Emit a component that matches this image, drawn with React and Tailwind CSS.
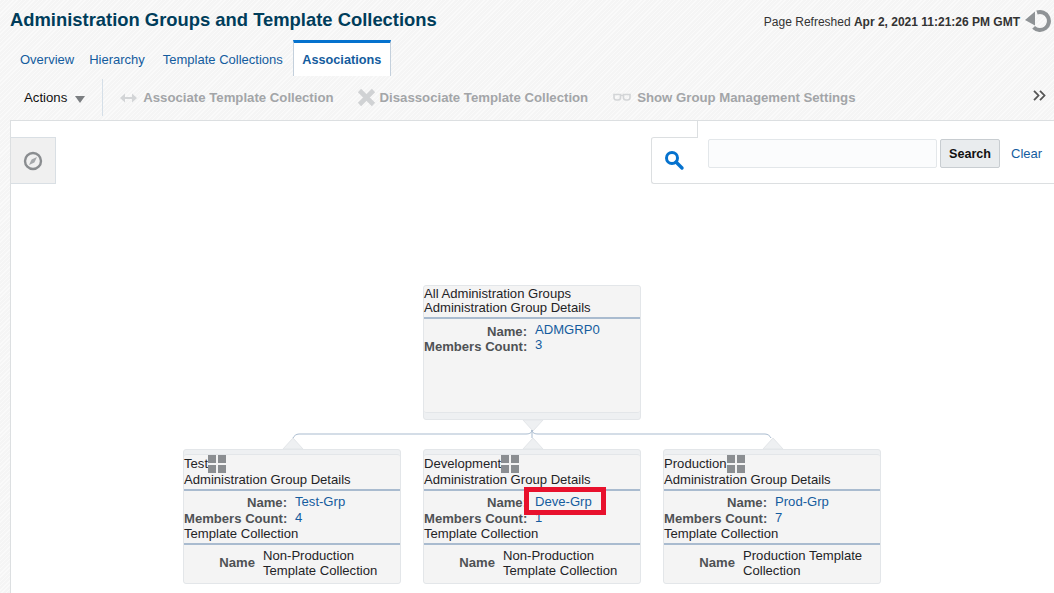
const hatch =
  "bg-[repeating-linear-gradient(135deg,#fafafa_0,#fafafa_1px,#f5f5f5_1px,#f5f5f5_3px)]";

const RefreshIcon = () => (
  <svg width="27" height="24" viewBox="0 0 27 24" className="shrink-0">
    <path d="M13 3.5A9 9 0 1 1 9.6 18.4" fill="none" stroke="#8f9396" strokeWidth="4" />
    <path d="M1 11 11 2.500V16.500z" fill="#8f9396" />
  </svg>
);

const SearchIcon = () => (
  <svg width="22" height="22" viewBox="0 0 22 22">
    <circle cx="9" cy="9" r="5.5" fill="none" stroke="#0572ce" strokeWidth="3" />
    <path d="M13 13l6 6" stroke="#0572ce" strokeWidth="3.4" strokeLinecap="round" />
  </svg>
);

const CompassIcon = () => (
  <svg width="20" height="20" viewBox="0 0 20 20">
    <circle cx="10" cy="10" r="8" fill="none" stroke="#8a8d90" strokeWidth="2.4" />
    <path d="M14 6l-2.6 5.4L6 14l2.6-5.4z" fill="#a5a8ab" />
  </svg>
);

const GridIcon = () => (
  <svg width="18" height="18" viewBox="0 0 18 18" className="shrink-0">
    <rect x="0" y="0" width="8" height="8" fill="#8b8e91" />
    <rect x="10" y="0" width="8" height="8" fill="#8b8e91" />
    <rect x="0" y="10" width="8" height="8" fill="#8b8e91" />
    <rect x="10" y="10" width="8" height="8" fill="#8b8e91" />
  </svg>
);

const ArrowsIcon = () => (
  <svg width="17" height="10" viewBox="0 0 17 10">
    <path d="M0 5l5-4.5v9zM17 5l-5-4.5v9z" fill="#d3d5d7" />
    <path d="M4 5h9" stroke="#d3d5d7" strokeWidth="2" />
  </svg>
);

const CrossIcon = () => (
  <svg width="19" height="19" viewBox="0 0 19 19">
    <path d="M2.5 2.5l14 14M16.5 2.5l-14 14" stroke="#d0d2d4" strokeWidth="4.6" />
  </svg>
);

const GlassesIcon = () => (
  <svg width="18" height="9" viewBox="0 0 18 9" fill="none">
    <path d="M1 1.5h6.5v3a2.5 2.5 0 0 1-2.5 2.5H3.5A2.5 2.5 0 0 1 1 4.500zM10.500 1.500H17v3A2.500 2.500 0 0 1 14.500 7H13a2.500 2.500 0 0 1-2.500-2.500z" stroke="#d3d5d7" strokeWidth="1.6" />
    <path d="M7.500 2.500h3" stroke="#d3d5d7" strokeWidth="1.400" />
  </svg>
);

const ChevronsIcon = () => (
  <svg width="13" height="11" viewBox="0 0 13 11" fill="none">
    <path d="M1 .8 5.500 5.500 1 10.200M7 .8l4.500 4.700L7 10.200" stroke="#555" strokeWidth="1.800" />
  </svg>
);

const ToolbarButton = ({ icon, label, iconBox }) => (
  <div className="flex items-center">
    <div className={`flex ${iconBox}`}>{icon}</div>
    <span className="text-[13.2px] font-bold whitespace-nowrap text-[#a3a5a8]">{label}</span>
  </div>
);

const DetailRow = ({ label, value, root }) => (
  <div className={`flex ${root ? "h-[15px]" : "h-[16px]"}`}>
    <span className="w-[103px] text-right font-bold whitespace-nowrap text-[#4f5254]">{label}</span>
    <a className={`ml-[8px] text-[#145c9e] ${root ? "-mt-[2px]" : "-mt-[1px]"}`}>{value}</a>
  </div>
);

const Node = ({ pos, title, name, count, collection }) => {
  const root = !collection;
  return (
    <div
      className={`absolute ${pos} w-[218px] h-[135px] rounded-[3px] border border-[#e3e6e9] bg-[#eef0f2] text-[13.1px] text-[#1f2326] ${
        root ? "pb-[6px]" : "pt-[4px]"
      }`}
    >
      <div
        className={`h-full rounded-[3px] bg-[#f4f4f4] flex flex-col border-[#e3e6e9] ${
          root ? "border-b" : "border-t"
        }`}
      >
        {root ? (
          <div className="h-[33px] leading-[14px] border-b-2 border-[#a9bbcf] pt-[1px]">
            <div>{title}</div>
            <div>Administration Group Details</div>
          </div>
        ) : (
          <div className="h-[36px] leading-[15px] border-b-2 border-[#a9bbcf]">
            <div className="flex h-[17px] items-center">
              <span>{title}</span>
              <GridIcon />
            </div>
            <div>Administration Group Details</div>
          </div>
        )}
        <div className={root ? "pt-[5px] leading-[15px]" : "pt-[4px] leading-[16px]"}>
          <DetailRow label="Name:" value={name} root={root} />
          <DetailRow label="Members Count:" value={count} root={root} />
        </div>
        {collection && (
          <>
            <div className="-mt-px h-[15px] leading-[15px]">Template Collection</div>
            <div className="mt-[2px] flex flex-1 border-t-2 border-[#a9bbcf] pt-[3px] leading-[15px]">
              <span className="w-[71px] mt-[7px] h-[15px] text-right font-bold text-[#4f5254]">Name</span>
              <span className="ml-[8px] w-[130px]">{collection}</span>
            </div>
          </>
        )}
      </div>
    </div>
  );
};

const Connectors = () => (
  <svg className="absolute left-0 top-0" width="1043" height="472" viewBox="0 0 1043 472" fill="none">
    {/* canvas origin sits at page x=11, y=121 */}
    <path d="M512 299h20l-10 11z" fill="#eef0f2" stroke="#e3e6e9" />
    <path d="M272 328l10-11 10 11zM512 328l10-11 10 11zM752 328l10-11 10 11z" fill="#eef0f2" stroke="#e3e6e9" />
    <path
      d="M282 317c1-2 3-4 6-4h227c3 0 6-1 6-4 0 3 3 4 6 4h227c3 0 5 2 6 4M521 309v8"
      stroke="#a9bbcf"
      strokeWidth="1"
    />
  </svg>
);

export default function App() {
  return (
    <div
      className={`w-[1054px] h-[593px] overflow-hidden flex flex-col font-['Liberation_Sans',Arial,sans-serif] ${hatch}`}
    >
      <header className="h-[40px] flex justify-between pl-[10px] pr-[3px]">
        <h1 className="pt-[8px] text-[18.4px] leading-[23px] font-bold text-[#003d5b]">
          Administration Groups and Template Collections
        </h1>
        <div className="flex items-start pt-[9px] gap-[4px]">
          <p className="pt-[6px] text-[12px] leading-[14px] text-[#333]">
            Page Refreshed <span className="font-bold">Apr 2, 2021 11:21:26 PM GMT</span>
          </p>
          <RefreshIcon />
        </div>
      </header>

      <nav className="h-[36px] flex pl-[10px] text-[13px] text-[#145c9e]">
        <a className="pl-[10px] pr-[6px] pt-[10px]">Overview</a>
        <a className="pl-[9px] pr-[8px] pt-[10px]">Hierarchy</a>
        <a className="px-[10px] pt-[10px]">Template Collections</a>
        <a className="w-[98px] border-x border-[#c4d0dc] border-t-[3px] border-t-[#0572ce] bg-white pt-[8px] text-center text-[12.7px] font-bold">
          Associations
        </a>
      </nav>

      <div className="h-[44px] flex items-center pl-[24px] pr-[8px]">
        <span className="text-[13.2px] text-[#111]">Actions</span>
        <span className="ml-[8px] mt-[3px] border-x-[5.5px] border-t-[7px] border-x-transparent border-t-[#7b7e81]" />
        <span className="ml-[17px] mb-[1px] h-[37px] w-px bg-[#d5dfe8]" />
        <ToolbarButton icon={<ArrowsIcon />} label="Associate Template Collection" iconBox="w-[40px] pl-[17px]" />
        <ToolbarButton icon={<CrossIcon />} label="Disassociate Template Collection" iconBox="w-[46px] pl-[23px]" />
        <ToolbarButton icon={<GlassesIcon />} label="Show Group Management Settings" iconBox="w-[49px] pl-[25px]" />
        <span className="ml-auto mb-[6px]">
          <ChevronsIcon />
        </span>
      </div>

      <main className="relative flex-1 ml-[10px] border-l border-t border-[#dcdfe1] bg-white">
        <Connectors />

        <div className="absolute left-0 top-[16px] flex h-[47px] w-[45px] items-center justify-center border-y border-r border-[#d9dfe4] bg-[#f0f0f0]">
          <CompassIcon />
        </div>

        <div className="absolute right-0 top-0 h-[63px] w-[403px]">
          <div className="absolute left-[46px] top-0 h-[17px] w-px bg-[#dcdfe1]" />
          <div className="absolute left-0 top-[16px] h-[47px] w-[47px] rounded-tl-[3px] border-t border-[#dcdfe1]" />
          <div className="absolute inset-x-0 top-[16px] flex h-[47px] items-start rounded-l-[3px] border-y border-l border-[#dcdfe1] border-t-transparent pl-[56px] pt-[1px]">
            <div className="absolute left-[11px] top-[11px]">
              <SearchIcon />
            </div>
            <div className="h-[29px] w-[229px] rounded-[2px] border border-[#e3e7ea] bg-[#fbfcfd]" />
            <button className="ml-[3px] h-[29px] w-[60px] rounded-[2px] border border-[#c8cdd1] bg-[#e9ecee] pt-px text-[12.6px] font-bold text-[#111]">
              Search
            </button>
            <a className="ml-[11px] pt-[5px] text-[13px] text-[#145c9e]">Clear</a>
          </div>
        </div>

        <Node pos="left-[412px] top-[164px]" title="All Administration Groups" name="ADMGRP0" count="3" />
        <Node
          pos="left-[172px] top-[328px]"
          title="Test"
          name="Test-Grp"
          count="4"
          collection={<>Non-Production<br />Template Collection</>}
        />
        <Node
          pos="left-[412px] top-[328px]"
          title="Development"
          name="Deve-Grp"
          count="1"
          collection={<>Non-Production<br />Template Collection</>}
        />
        <Node
          pos="left-[652px] top-[328px]"
          title="Production"
          name="Prod-Grp"
          count="7"
          collection={<>Production Template<br />Collection</>}
        />

        {/* callout around the Deve-Grp link */}
        <div className="absolute left-[513px] top-[366px] h-[28px] w-[82px] border-[5px] border-[#e8112d]" />
      </main>
    </div>
  );
}
